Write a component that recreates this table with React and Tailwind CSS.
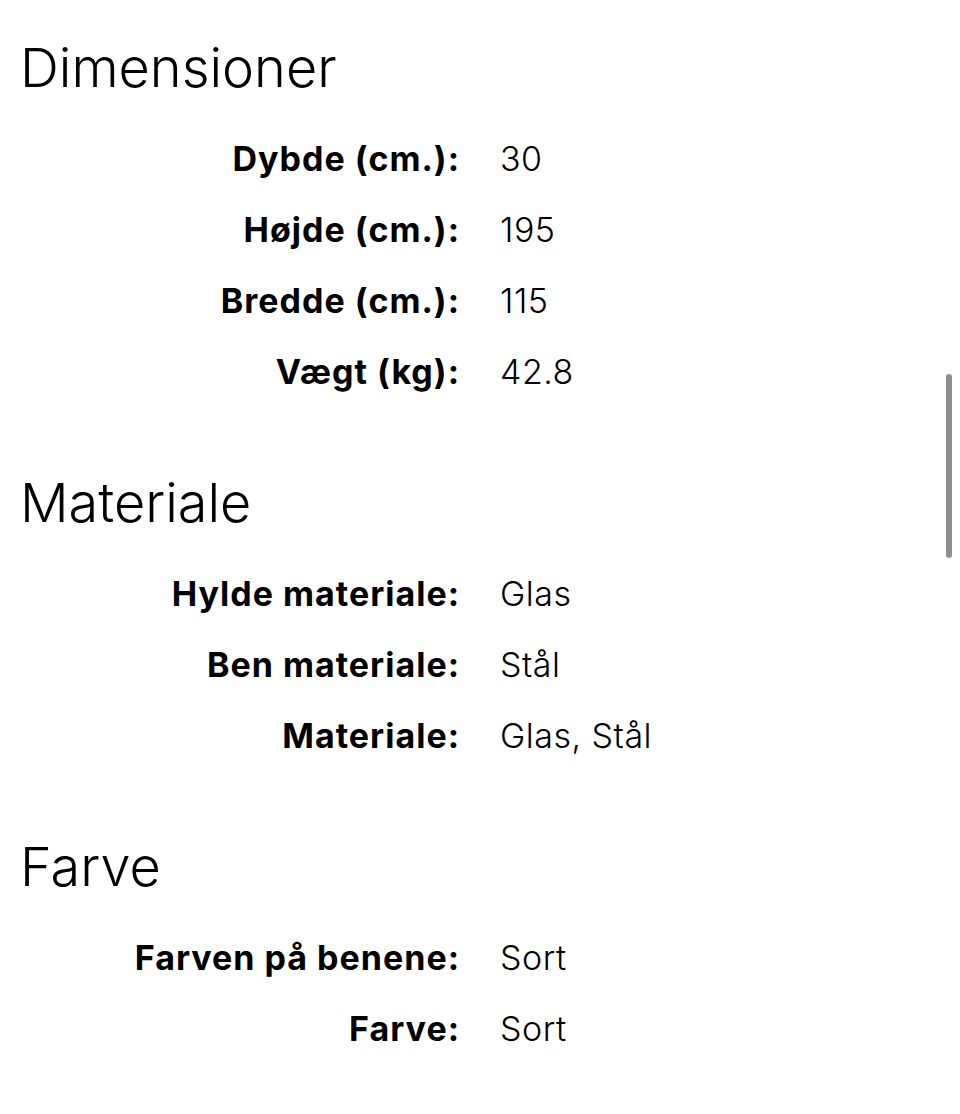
import React from "react";

const sections = [
  {
    title: "Dimensioner",
    rows: [
      ["Dybde (cm.):", "30"],
      ["Højde (cm.):", "195"],
      ["Bredde (cm.):", "115"],
      ["Vægt (kg):", "42.8"],
    ],
  },
  {
    title: "Materiale",
    rows: [
      ["Hylde materiale:", "Glas"],
      ["Ben materiale:", "Stål"],
      ["Materiale:", "Glas, Stål"],
    ],
  },
  {
    title: "Farve",
    rows: [
      ["Farven på benene:", "Sort"],
      ["Farve:", "Sort"],
    ],
  },
];

function SpecSection({ title, rows }) {
  return (
    <section className="mb-16 last:mb-0">
      <h2 className="-ml-[2px] h-16 leading-[64px] text-[54px] font-light text-black">
        {title}
      </h2>
      <div className="mt-[23px] grid grid-cols-[438px_1fr] gap-x-10">
        {rows.map(([label, value]) => (
          <React.Fragment key={label}>
            <div className="h-[71px] flex items-center justify-end text-[34px] font-bold tracking-[1px] text-black">
              {label}
            </div>
            <div className="h-[71px] flex items-center text-[34px] font-light tracking-[0.5px] text-black">
              {value}
            </div>
          </React.Fragment>
        ))}
      </div>
    </section>
  );
}

export default function App() {
  return (
    <div
      className="relative w-[960px] h-[1114px] overflow-hidden bg-white px-[22px] pt-9"
      style={{ fontFamily: "Inter, 'Noto Sans', sans-serif" }}
    >
      {sections.map((s) => (
        <SpecSection key={s.title} title={s.title} rows={s.rows} />
      ))}
      <div className="absolute right-[8px] top-[374px] w-[6px] h-[184px] rounded-full bg-[#8e8e8e]" />
    </div>
  );
}
